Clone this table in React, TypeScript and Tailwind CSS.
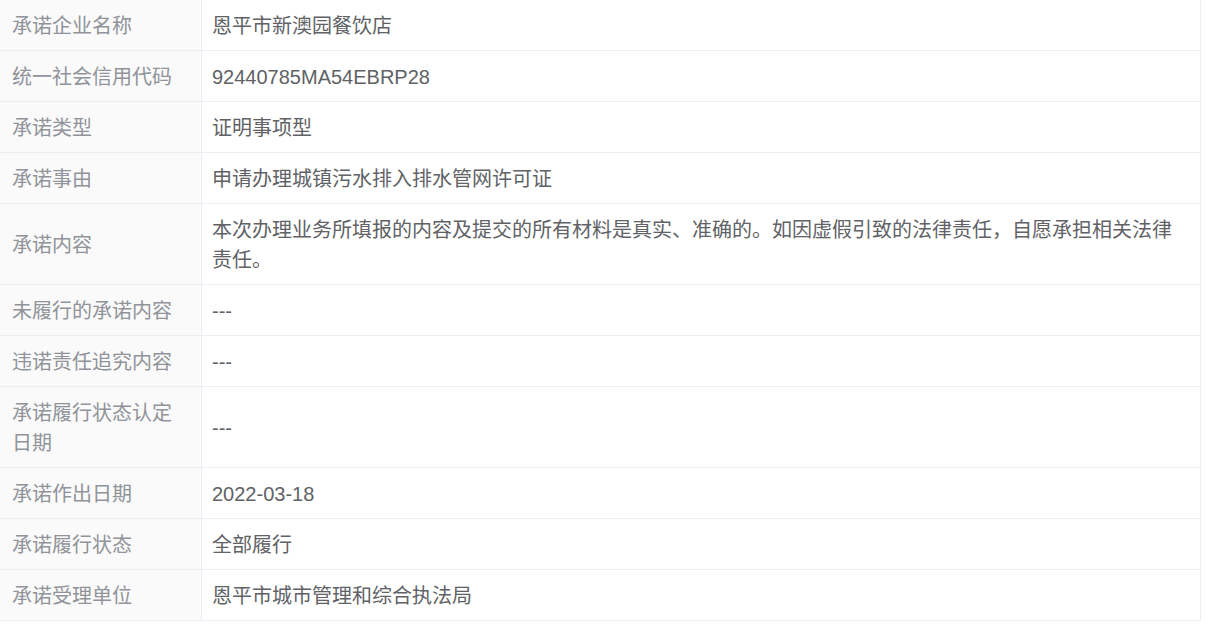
import React from 'react';

const ROWS: { label: string; value: string }[] = [
    { label: '承诺企业名称', value: '恩平市新澳园餐饮店' },
    { label: '统一社会信用代码', value: '92440785MA54EBRP28' },
    { label: '承诺类型', value: '证明事项型' },
    { label: '承诺事由', value: '申请办理城镇污水排入排水管网许可证' },
    {
        label: '承诺内容',
        value: '本次办理业务所填报的内容及提交的所有材料是真实、准确的。如因虚假引致的法律责任，自愿承担相关法律责任。',
    },
    { label: '未履行的承诺内容', value: '---' },
    { label: '违诺责任追究内容', value: '---' },
    { label: '承诺履行状态认定日期', value: '---' },
    { label: '承诺作出日期', value: '2022-03-18' },
    { label: '承诺履行状态', value: '全部履行' },
    { label: '承诺受理单位', value: '恩平市城市管理和综合执法局' },
];

export default function App() {
    return (
        <div
            className="min-h-screen bg-white"
            style={{ fontFamily: '"Liberation Sans", "Noto Sans CJK SC", sans-serif' }}
        >
            <div className="w-[1201px] border-r border-[#ebeef5] text-[20px] leading-[30px]">
                {ROWS.map((row) => (
                    <div key={row.label} className="flex border-b border-[#ebeef5]">
                        <div className="w-[202px] shrink-0 border-r border-[#ebeef5] bg-[#fafafa] px-3 pt-[11px] pb-[9px] flex items-center text-[#909399]">
                            {row.label}
                        </div>
                        <div className="flex-1 pl-[10px] pr-3 pt-[11px] pb-[9px] flex items-center text-[#606266]">
                            {row.value}
                        </div>
                    </div>
                ))}
            </div>
        </div>
    );
}
